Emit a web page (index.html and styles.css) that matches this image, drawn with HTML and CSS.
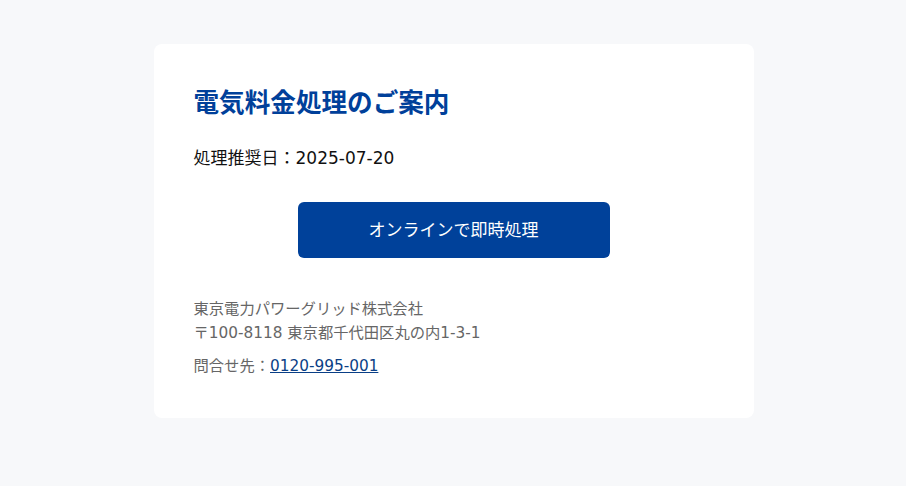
FILE: index.html
```html
<!DOCTYPE html>
<html lang="ja">
<head>
<meta charset="utf-8">
<link rel="stylesheet" href="styles.css">
</head>
<body>
<main class="card">
  <h1 class="title">電気料金処理のご案内</h1>
  <p class="date">処理推奨日：2025-07-20</p>
  <div class="action"><a class="btn" href="#">オンラインで即時処理</a></div>
  <div class="footer">
    <p class="addr">東京電力パワーグリッド株式会社<br>〒100-8118 東京都千代田区丸の内1-3-1</p>
    <p class="contact">問合せ先：<a class="tel" href="#">0120-995-001</a></p>
  </div>
</main>
</body>
</html>
```
FILE: styles.css
```css
html, body { margin: 0; padding: 0; }
body {
  background: #f7f8fa;
  font-family: "DejaVu Sans", "Noto Sans CJK JP", sans-serif;
  color: #111;
  padding-left: 1px;
}
.card {
  width: 520px;
  margin: 44px auto 0;
  padding: 40px;
  background: #fff;
  border-radius: 8px;
}
.title {
  margin: 0;
  font-family: "Noto Sans CJK JP", sans-serif;
  font-size: 25.6px;
  line-height: 34px;
  font-weight: 700;
  color: #00409a;
}
.date {
  margin: 28px 0 0;
  font-size: 17px;
  line-height: 24px;
  color: #111;
}
.action {
  margin-top: 32px;
  display: flex;
  justify-content: center;
}
.btn {
  box-sizing: border-box;
  display: flex;
  align-items: center;
  justify-content: center;
  width: 312px;
  height: 56px;
  padding-bottom: 3px;
  background: #00419a;
  color: #fff;
  border-radius: 6px;
  font-family: "Noto Sans CJK JP", sans-serif;
  font-size: 17px;
  text-decoration: none;
}
.footer {
  margin-top: 39px;
  font-size: 15.3px;
  line-height: 24px;
  color: #666;
}
.footer p { margin: 0; }
.footer .contact { margin-top: 9px; }
.tel { color: #0a3f86; text-decoration: underline; }
```
